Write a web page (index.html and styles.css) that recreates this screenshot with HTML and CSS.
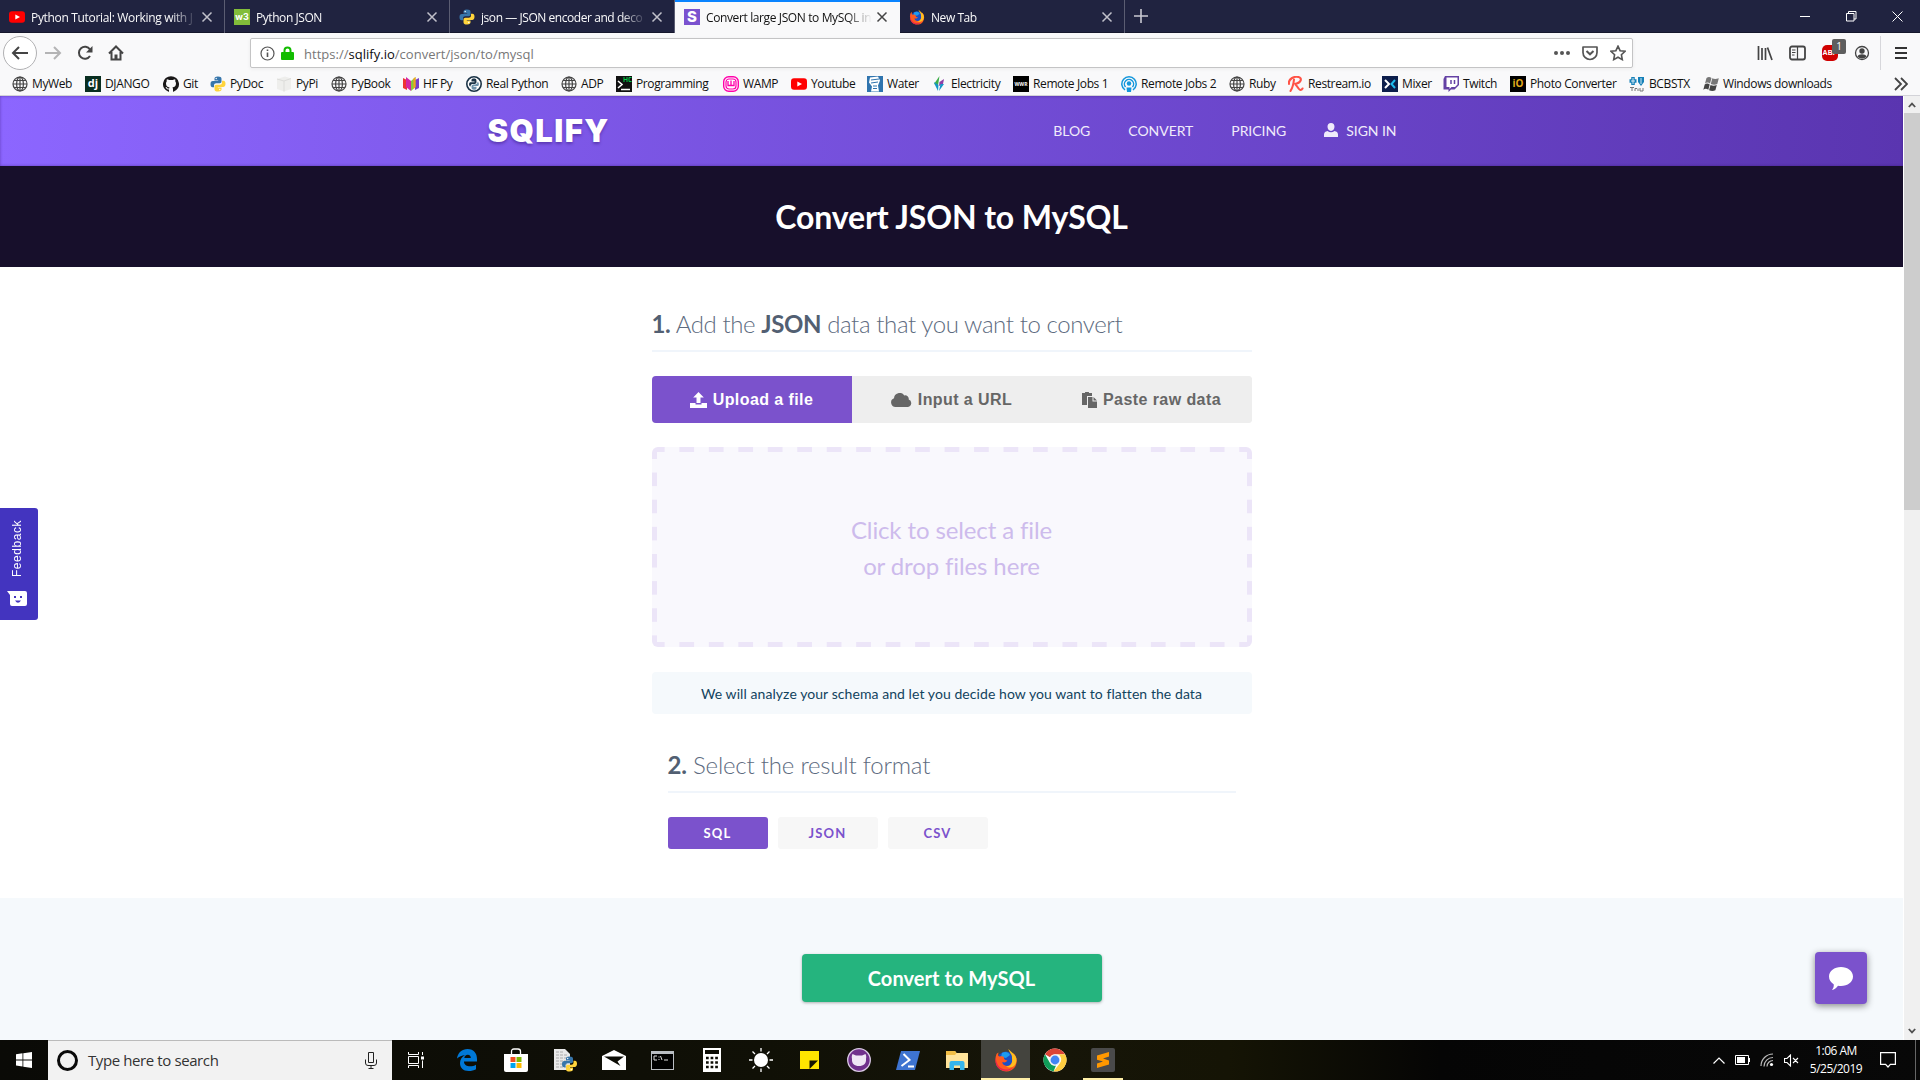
FILE: index.html
```html
<!DOCTYPE html>
<html lang="en">
<head>
<meta charset="utf-8">
<title>Convert large JSON to MySQL</title>
<link rel="stylesheet" href="styles.css">
</head>
<body>
<svg class="defs" width="0" height="0">
  <symbol id="globe" viewBox="0 0 16 16"><g fill="none" stroke="#444" stroke-width="1.2"><circle cx="8" cy="8" r="7"/><ellipse cx="8" cy="8" rx="3.4" ry="7"/><path d="M8 1v14M1 8h14M2 4.5h12M2 11.5h12"/></g></symbol>
  <symbol id="yt" viewBox="0 0 16 16"><rect y="2.3" width="16" height="11.4" rx="3" fill="#f00"/><path d="M6.3 5.4v5.2L11 8z" fill="#fff"/></symbol>
  <symbol id="python" viewBox="0 0 16 16"><path fill="#3776ab" d="M7.9.5C5 .5 4.5 1.7 4.5 2.8v1.7h3.7v.6H2.8C1.300 5.100.5 6.300.5 8.200s.8 3 2 3h1.500V9.400c0-1.200 1-2.100 2.200-2.100h3.600c1 0 1.700-.8 1.700-1.700V2.800C11.500 1.300 10.400.5 7.900.5z"/><path fill="#ffd43b" d="M8.100 15.500c2.900 0 3.400-1.200 3.400-2.300v-1.700H7.800v-.6h5.400c1.500 0 2.300-1.200 2.300-3.100s-.8-3-2-3H12v1.900c0 1.200-1 2-2.200 2H6.200c-1 0-1.700.8-1.700 1.700v2.800c0 1.500 1.100 2.300 3.600 2.300z"/><circle cx="6.200" cy="2.500" r=".7" fill="#fff"/><circle cx="9.800" cy="13.500" r=".7" fill="#fff"/></symbol>
  <symbol id="firefox" viewBox="0 0 24 24"><circle cx="12" cy="12.500" r="9" fill="#1b4fc4"/><path fill="#1c9bf0" d="M8 5c3-2 7-1 8 2l-4 3-5-1z"/><path fill="#ff5a1f" d="M2.500 6c-2 5-1.500 12 3.500 15.500 5 3.500 12 2 15-2.500 3-5 2-11-2-14 1 3 0 4-1 5 1 5-1.500 8-5 8-3 0-5-2-4.500-4 2 1 4 0 5-1.500-2 0-4-1-3.500-3.500-1-1-3-1-4.500-.5C4 8 4 7 4.500 4.500 3.500 5 3 5.500 2.500 6z"/><path fill="#ffbd1f" d="M14.500 1c0 3 4 5 3.500 9 1 5-1.500 8.500-6 8.500 5 2.500 10 0 10.500-6C23 7 18 5 14.500 1z"/><path fill="#e6224f" d="M2 9c-.5 7 4 12.500 10 12.500 3 0 5-.5 7-2-3 4-10 4.500-14 1C1.500 17.500 1 13 2 9z"/></symbol>
  <symbol id="close" viewBox="0 0 12 12"><path d="M1.500 1.500l9 9M10.500 1.500l-9 9" stroke="currentColor" stroke-width="1.500" fill="none"/></symbol>
</svg>

<div class="tabstrip">
  <div class="tab"><svg class="i16"><use href="#yt"/></svg><span class="tab-title t1">Python Tutorial: Working with J</span><svg class="x"><use href="#close"/></svg></div>
  <div class="tab"><span class="fav w3">w3</span><span class="tab-title">Python JSON</span><svg class="x"><use href="#close"/></svg></div>
  <div class="tab"><svg class="i16"><use href="#python"/></svg><span class="tab-title">json — JSON encoder and deco</span><svg class="x"><use href="#close"/></svg></div>
  <div class="tab active"><span class="fav sq">S</span><span class="tab-title t4">Convert large JSON to MySQL in</span><svg class="x"><use href="#close"/></svg></div>
  <div class="tab"><svg class="i16"><use href="#firefox"/></svg><span class="tab-title">New Tab</span><svg class="x"><use href="#close"/></svg></div>
  <svg class="plus" viewBox="0 0 14 14"><path d="M7 0v14M0 7h14" stroke="#c9c9d1" stroke-width="1.600"/></svg>
  <div class="winctl">
    <svg viewBox="0 0 11 11"><path d="M0 5.500h10" stroke="#fff"/></svg>
    <svg viewBox="0 0 11 11"><path d="M.5 2.500h7.500v7.500H.5zM2.500 2.500v-2h7.500v7.500H8" fill="none" stroke="#fff"/></svg>
    <svg viewBox="0 0 11 11"><path d="M.5.5l10 10M10.500.5l-10 10" stroke="#fff"/></svg>
  </div>
</div>

<div class="toolbar">
  <div class="navbtns">
    <span class="back"><svg width="18" height="16" viewBox="0 0 18 16"><path d="M17 8H2M8 2L2 8l6 6" fill="none" stroke="#444" stroke-width="2"/></svg></span>
    <svg width="18" height="16" viewBox="0 0 18 16"><path d="M1 8h15M10 2l6 6-6 6" fill="none" stroke="#b4b4b5" stroke-width="2"/></svg>
    <svg width="16" height="16" viewBox="0 0 16 16"><path d="M13 11a6 6 0 1 1 0-6.500" fill="none" stroke="#444" stroke-width="2"/><path d="M15.500 1v6.500H9z" fill="#444"/></svg>
    <svg width="16" height="16" viewBox="0 0 16 16"><path d="M1 8.500L8 1.500l7 7M3.500 7v7.500h9V7" fill="none" stroke="#444" stroke-width="2"/><path d="M6.500 9.500h3V15h-3z" fill="#444"/></svg>
  </div>
  <div class="urlbar">
    <svg width="15" height="15" viewBox="0 0 15 15"><circle cx="7.500" cy="7.500" r="6.500" fill="none" stroke="#555" stroke-width="1.200"/><path d="M7.500 6.500V11M7.500 3.500v1.600" stroke="#555" stroke-width="1.600"/></svg>
    <svg class="lock" width="13" height="14" viewBox="0 0 13 14"><path d="M3.500 7V4.500a3 3 0 0 1 6 0V7" fill="none" stroke="#12bc00" stroke-width="2"/><rect y="6" width="13" height="8" rx="1" fill="#12bc00"/></svg>
    <span class="url">https://<b>sqlify.io</b>/convert/json/to/mysql</span>
    <div class="urlicons">
      <svg width="16" height="16" viewBox="0 0 16 16" fill="#555"><circle cx="2" cy="8" r="2"/><circle cx="8" cy="8" r="2"/><circle cx="14" cy="8" r="2"/></svg>
      <svg width="16" height="16" viewBox="0 0 16 16"><path d="M1 2h14v5.500a7 7 0 0 1-14 0z" fill="none" stroke="#555" stroke-width="1.700" stroke-linejoin="round"/><path d="M4.500 6L8 9.300 11.500 6" fill="none" stroke="#555" stroke-width="2"/></svg>
      <svg width="16" height="16" viewBox="0 0 16 16"><path d="M8 1.200l2.100 4.500 4.900.6-3.600 3.400.9 4.900L8 12.200l-4.300 2.400.9-4.900L1 6.300l4.900-.6z" fill="none" stroke="#555" stroke-width="1.600"/></svg>
    </div>
  </div>
  <div class="tools">
    <svg width="16" height="16" viewBox="0 0 16 16"><path d="M1.500 1v14M5 3v12M8.500 3v12M10.500 2.500L15 15" stroke="#444" stroke-width="1.700"/></svg>
    <svg width="17" height="16" viewBox="0 0 17 16"><rect x="1" y="1.500" width="15" height="13" rx="2" fill="none" stroke="#444" stroke-width="1.800"/><path d="M8.500 2v12M3 5h3.500M3 7.500h3.500M3 10h2.500" stroke="#444" stroke-width="1.200"/></svg>
    <span class="abp">ABP<i>1</i></span>
    <svg width="16" height="16" viewBox="0 0 16 16"><circle cx="8" cy="8" r="6.500" fill="none" stroke="#444" stroke-width="1.300"/><circle cx="8" cy="6" r="2.700" fill="#444"/><path d="M3.500 11.500c1-3 8-3 9 0-2 2.500-7 2.500-9 0z" fill="#444"/></svg>
    <span class="sep"></span>
    <svg width="14" height="14" viewBox="0 0 14 14"><path d="M1 2h12M1 7h12M1 12h12" stroke="#333" stroke-width="1.800"/></svg>
  </div>
</div>

<div class="bookmarks">
  <span><svg><use href="#globe"/></svg>MyWeb</span>
  <span><em class="dj">dj</em>DJANGO</span>
  <span><svg viewBox="0 0 16 16"><path fill="#191717" d="M8 .2a8 8 0 0 0-2.500 15.600c.4.100.5-.2.500-.4v-2c-2 .5-2.500-.6-2.800-1.300-.2-.4-.5-.8-.8-1 .9-.3 1.600.5 1.900.9.500.6 1 .7 1.800.4.100-.5.300-.8.500-1-2-.3-3.600-1-3.600-3.900 0-.9.300-1.600.8-2.200-.2-.7-.2-1.400.1-2.100.8 0 1.600.4 2.200.9 1.300-.3 2.500-.3 3.800 0 .6-.5 1.400-.9 2.200-.9.300.7.300 1.400.1 2.100.5.600.8 1.300.8 2.200 0 2.900-1.700 3.600-3.600 3.900.4.400.6.900.6 1.600v2.400c0 .200.1.500.5.400A8 8 0 0 0 8 .2z"/></svg>Git</span>
  <span><svg><use href="#python"/></svg>PyDoc</span>
  <span><svg viewBox="0 0 16 16"><path d="M1 3l8-2.500 6 2V13l-7 2.500L1 13z" fill="#eeeeec"/><path d="M1 3l7 2 7-2.500M8 5v10.500" fill="none" stroke="#dcdcda"/></svg>PyPi</span>
  <span><svg><use href="#globe"/></svg>PyBook</span>
  <span><svg viewBox="0 0 16 16"><path d="M0 2l4 2v10l-4-2z" fill="#e33"/><path d="M3 1l5 4v10l-5-4z" fill="#d326a4"/><path d="M16 2l-4 2v10l4-2z" fill="#7a3fc8"/><path d="M12.500 1L8 5v10l4.500-4z" fill="#8cc63f"/><path d="M10.500 2.500l2-1.500v10l-2 2z" fill="#f6a21c"/></svg>HF Py</span>
  <span><svg viewBox="0 0 16 16"><circle cx="8" cy="8" r="7.200" fill="#fff" stroke="#1b3346" stroke-width="1.600"/><path d="M8 2.500c-3 0-2.500 1.500-2.500 3h3v.8H4C2.500 7 3 10.500 4.500 10.500c0-2 1-2.500 3-2.500s3-.5 3-2c0-2 0-3.500-2.500-3.500z" fill="#1b3346"/><path d="M8 13.700c3 0 2.500-1.500 2.500-3h-3V10H12c1.500-.5 1-4-.5-4.200 0 2-1 2.700-3 2.700s-3 .5-3 2c0 2 0 3.200 2.500 3.200z" fill="#6f93ab"/></svg>Real Python</span>
  <span><svg><use href="#globe"/></svg>ADP</span>
  <span><svg viewBox="0 0 16 16"><path d="M0 0h16v16H0z" fill="#111"/><path d="M2 5l4 3.500L2 12M5 13.500h9" fill="none" stroke="#fff" stroke-width="1.600"/><path d="M8 1v5M11 1v5M8 3.500h3M15.500 1.500H13v4h2.500" fill="none" stroke="#0c4"/></svg>Programming</span>
  <span><svg viewBox="0 0 16 16"><rect x=".7" y=".7" width="14.600" height="14.600" rx="5" fill="#fff" stroke="#f0a" stroke-width="1.400"/><rect x="3" y="3" width="10" height="10" rx="3" fill="none" stroke="#f0a" stroke-width="1.200"/><path d="M5 5v4.500h6V5M8 4.500v5" stroke="#f0a" fill="none" stroke-width="1.300"/></svg>WAMP</span>
  <span><svg><use href="#yt"/></svg>Youtube</span>
  <span><svg viewBox="0 0 16 16"><path d="M0 0h16v16H0z" fill="#2f74ae"/><path d="M3 1.500l8-1 2 4-2 5 1 6H4l1-5-3-4z" fill="#fff"/><path d="M4 4l8-1M4 7l7-1M6 10h4M6 12.500h4" stroke="#2f74ae"/></svg>Water</span>
  <span><svg viewBox="0 0 16 16"><path d="M8.500 0L3 8l4 1.500z" fill="#3fae49"/><path d="M13 3L8.500 6 8 10l4-2z" fill="#8d3fa8"/><path d="M3 6l4.500 3L7 15 4 9zM9.500 8L13 8l-5 7z" fill="#1696c8"/></svg>Electricity</span>
  <span><em class="wwr">WWR</em>Remote Jobs 1</span>
  <span><svg viewBox="0 0 16 16"><g fill="none" stroke="#1497dc" stroke-width="1.500"><path d="M4 14a7.200 7.200 0 1 1 8 0M4.500 11a4.600 4.600 0 1 1 7 0"/></g><circle cx="8" cy="7.500" r="2.200" fill="#1497dc"/><path d="M5.500 11.500h5L10 16H6z" fill="#1497dc"/></svg>Remote Jobs 2</span>
  <span><svg><use href="#globe"/></svg>Ruby</span>
  <span><svg viewBox="0 0 16 16"><path d="M6 3.500C5.500 8 4.500 12 2.500 15M1 8c-1-5 5-8 9.500-7 4 1 3 6-4 7 2 0 4 6 6 6 1 0 1.500-.5 2-1.500" fill="none" stroke="#ff5346" stroke-width="2.100" stroke-linecap="round"/></svg>Restream.io</span>
  <span><svg viewBox="0 0 16 16"><path d="M0 0h16v16H0z" fill="#0d1e4b"/><path d="M3 4l4 4-4 4" fill="none" stroke="#fff" stroke-width="2"/><path d="M13 4L9.500 8l3.500 4" fill="none" stroke="#1fbaed" stroke-width="2"/></svg>Mixer</span>
  <span><svg viewBox="0 0 16 16"><path d="M2 0h14v9l-4.500 4.500H8L5.500 16V13.500H.5V3z" fill="#6441a4"/><path d="M3.500 1.500h11v7L12 11H8.500l-2 2v-2h-3z" fill="#fff"/><path d="M8 4v4M11.500 4v4" stroke="#6441a4" stroke-width="1.500"/></svg>Twitch</span>
  <span><em class="io">iO</em>Photo Converter</span>
  <span><svg viewBox="0 0 16 16"><path d="M4 1v8M.5 5h7" stroke="#1580b8" stroke-width="3.500"/><path d="M9 1h6v5l-3 4-3-4z" fill="#1580b8"/><path d="M12 2v6M4 2v6M2 5h4" stroke="#fff" stroke-width=".8"/><path d="M1 11.500h4M3 11.500V15M6 15v-2.500h2M9 12.500V15M11 12v3h3v-3" stroke="#777" fill="none"/></svg>BCBSTX</span>
  <span><svg viewBox="0 0 16 16"><g fill="#777"><path d="M3.500 2q2.500-2 5 0L7 7.500q-2.500-2-5 0zM9.300 2.300q2.500 1.500 6.500 0L14.300 8q-3 1.500-6.500 0z"/></g><g fill="#444"><path d="M1.700 8.500q2.500-2 5 0l-1.400 5.300q-2.500-2-5 0zM7.500 9q3 1.500 6.300 0l-1.400 5.200q-3 1.500-6.300 0z"/></g></svg>Windows downloads</span>
  <svg class="more" viewBox="0 0 14 14"><path d="M1 1l6 6-6 6M7 1l6 6-6 6" fill="none" stroke="#444" stroke-width="1.800"/></svg>
</div>

<div class="viewport">
  <main class="page">
    <header class="site-head">
      <div class="site-inner">
        <a class="logo">SQLIFY</a>
        <nav><a>BLOG</a><a>CONVERT</a><a>PRICING</a><a class="signin"><svg width="14" height="14" viewBox="0 0 14 14" fill="#f0ebfb"><path d="M7 0c2.300 0 3.500 1.600 3.500 3.800S9 8 7 8 3.500 6 3.500 3.800 4.700 0 7 0zM0 14v-2.500C0 9.500 1.500 8.300 3.500 8c2 1.600 5 1.600 7 0 2 .3 3.500 1.500 3.500 3.500V14z"/></svg>SIGN IN</a></nav>
      </div>
    </header>
    <section class="hero"><h1>Convert JSON to MySQL</h1></section>
    <section class="form">
      <h2><b>1.</b> Add the <b>JSON</b> data that you want to convert</h2>
      <div class="seg">
        <button class="on"><svg width="17" height="16" viewBox="0 0 17 16" fill="currentColor"><path d="M8.500 0l5.300 5.500h-3.300V11h-4V5.500H3.200zM0 11h5.500v1.500h6V11H17v5H0z"/></svg>Upload a file</button>
        <button><svg width="21" height="14" viewBox="0 0 21 14" fill="currentColor"><path d="M4.500 14A4.500 4.500 0 0 1 3 5.300 5.600 5.600 0 0 1 13.300 2.500a3.500 3.500 0 0 1 4.400 4A3.900 3.900 0 0 1 17 14z"/></svg>Input a URL</button>
        <button><svg width="15" height="16" viewBox="0 0 15 16" fill="currentColor"><path d="M0 1h3a2 2 0 0 1 4 0h3v3H5v9H0z"/><path d="M6 5h4.500v4.500H15V16H6zM11.500 5L15 8.500h-3.500z"/></svg>Paste raw data</button>
      </div>
      <div class="drop">Click to select a file<br>or drop files here</div>
      <p class="note">We will analyze your schema and let you decide how you want to flatten the data</p>
      <div class="format">
        <h2><b>2.</b> Select the result format</h2>
        <div class="opts"><button class="on">SQL</button><button>JSON</button><button>CSV</button></div>
      </div>
    </section>
    <section class="action"><button class="go">Convert to MySQL</button></section>
    <aside class="feedback"><span>Feedback</span><svg width="20" height="16" viewBox="0 0 20 16"><path d="M0 0h18a2 2 0 0 1 2 2v11a2 2 0 0 1-2 2H5a2 2 0 0 1-2-2V4z" fill="#fff"/><path d="M7 5h2v2H7zM13 5h2v2h-2zM8 9.500h6q-3 4.500-6 0z" fill="#4334bf"/></svg></aside>
    <button class="chat"><svg width="24" height="23" viewBox="0 0 24 23"><path d="M12 0c6.600 0 12 4 12 9.600S18.600 19 12 19c-1 0-2 0-3-.3-1.500 2.300-3.500 3.600-6 4.300 1.500-2 2-3.500 1.700-5.700C2 15.500 0 13 0 9.600 0 4 5.400 0 12 0z" fill="#fff"/></svg></button>
  </main>
  <div class="scroll">
    <svg viewBox="0 0 8 6"><path d="M.8 5L4 1.600 7.200 5" fill="none" stroke="#505050" stroke-width="1.800"/></svg>
    <div class="thumb"></div>
    <svg viewBox="0 0 8 6"><path d="M.8 1L4 4.400 7.200 1" fill="none" stroke="#505050" stroke-width="1.800"/></svg>
  </div>
</div>

<footer class="taskbar">
  <div class="start"><svg width="16" height="16" viewBox="0 0 16 16" fill="#fff"><path d="M0 2.300l6.500-1v6.200H0zM7.300 1.200L16 0v7.500H7.300zM0 8.400h6.500v6.200l-6.500-1zM7.300 8.400H16V16l-8.700-1.200z"/></svg></div>
  <div class="search"><i class="ring"></i><span>Type here to search</span><svg width="12" height="17" viewBox="0 0 12 17"><path d="M3.500.5h5v10h-5zM.5 7.500V11q0 2.500 2.500 2.500h6q2.500 0 2.500-2.500V7.500M6 13.500v3M3.500 16.500h5" fill="none" stroke="#222"/></svg></div>
  <div class="apps">
    <span><svg width="16" height="16" viewBox="0 0 16 16"><path d="M.5 0v2.500h10V0M.5 4.500h10v7H.5zM.5 16v-2.500h10V16M14.500 0v3M14.500 8.500V16" fill="none" stroke="#fff"/><path d="M13 4.500h3v3h-3z" fill="#fff"/></svg></span>
    <span><svg width="20" height="22" viewBox="0 0 20 22"><path d="M0 9.500C1 3.500 5 0 10.500 0 17 0 20 4.500 20 10v2.500H7c0 3.500 3 4.800 6 4.800 2.500 0 4.300-.6 6-1.600v4.500c-2 1.200-4.500 1.800-7.300 1.800C6 22 3 18.500 3 14c0-3.500 2-6.300 5-7.700C5 6.500 2 7.500 0 9.500zM7.300 9h6.500c0-2-1-3.300-3-3.300S7.500 7 7.300 9z" fill="#0078d7"/></svg></span>
    <span><svg width="24" height="24" viewBox="0 0 24 24"><path d="M7.500 7V3.500Q7.500 1 10 1h4q2.500 0 2.500 2.500V7" fill="none" stroke="#fff" stroke-width="1.300"/><path d="M0 6h24v16q0 2-2 2H2q-2 0-2-2z" fill="#fff"/><path d="M6.500 9h5v5h-5z" fill="#f25022"/><path d="M12.500 9h5v5h-5z" fill="#7fba00"/><path d="M6.500 15h5v5h-5z" fill="#00a4ef"/><path d="M12.500 15h5v5h-5z" fill="#ffb900"/></svg></span>
    <span><svg width="24" height="24" viewBox="0 0 24 24"><path d="M1 1h11l5 5v16H1z" fill="#e9e9e9"/><path d="M3 4h8M3 7h11M3 10h11M3 13h11M3 16h11M3 19h11" stroke="#aaa" stroke-dasharray="3 1"/><use href="#python" x="8.500" y="8" width="16" height="16"/></svg></span>
    <span><svg width="24" height="20" viewBox="0 0 24 20"><path d="M0 6L12 0l12 6v14H0z" fill="#fff"/><path d="M2 6.500h20l-6.500 5 3 4.500z" fill="#0c0c05"/></svg></span>
    <span><svg width="23" height="19" viewBox="0 0 23 19"><path d="M0 0h23v19H0z" fill="#b9bdc2"/><path d="M1 3h21v15H1z"/><path d="M6 5H3v4h3M8 5.500v1M8 8v1M9.500 5l1.500 4M13 9h4" fill="none" stroke="#ddd"/></svg></span>
    <span><svg width="18" height="24" viewBox="0 0 18 24"><path d="M0 0h18v24H0z" fill="#fff"/><path d="M2 2h14v4H2z" fill="#0c0c05"/><path d="M3 10h12M3 14.500h12M3 19h12" stroke="#0c0c05" stroke-width="2.500" stroke-dasharray="2.700 1.900"/></svg></span>
    <span><svg width="24" height="24" viewBox="0 0 24 24"><circle cx="12" cy="12" r="7" fill="#fff"/><path d="M12 0v3.500M12 20.500V24M0 12h3.500M20.500 12H24M3.500 3.500L6 6M18 18l2.500 2.500M20.500 3.500L18 6M6 18l-2.500 2.500" stroke="#fff" stroke-width="1.300"/></svg></span>
    <span><svg width="19" height="18" viewBox="0 0 19 18"><path d="M0 0h19v18H0z" fill="#ffe600"/><path d="M9.500 18V9.500H18z" fill="#151500"/><path d="M11 18l8-8v8z" fill="#ffe600"/></svg></span>
    <span><svg width="24" height="24" viewBox="0 0 24 24"><circle cx="12" cy="12" r="11.300" fill="#70308c" stroke="#d9c9e4" stroke-width="1.300"/><path d="M5.500 6l3.500 1.500h6L18.500 6c1 2 .8 3.500.5 5 .5 4.500-2.500 7-7 7s-7.500-2.500-7-7c-.3-1.500-.5-3 .5-5z" fill="#efe6f5"/></svg></span>
    <span><svg width="24" height="19" viewBox="0 0 24 19"><path d="M5 0h19l-5 19H0z" fill="#3e74d1"/><path d="M7.500 3l6 6-8 6M12 15.500h6" fill="none" stroke="#fff" stroke-width="2"/></svg></span>
    <span><svg width="22" height="19" viewBox="0 0 22 19"><path d="M0 0h9l1.500 2H22v15H0z" fill="#ffe39a"/><path d="M0 0h9l1.500 2L9 4H0z" fill="#f1bd45"/><path d="M3.500 19V12q0-2 2-2h11q2 0 2 2v7H14v-4.500H8V19z" fill="#35b5ec"/></svg></span>
    <span class="cur"><svg width="24" height="24"><use href="#firefox"/></svg></span>
    <span><svg width="24" height="24" viewBox="0 0 24 24"><circle cx="12" cy="12" r="11.500" fill="#fff"/><path d="M2 6.200A11.500 11.500 0 0 1 22 6.300H12A5.700 5.700 0 0 0 7 9.200z" fill="#db4437"/><path d="M2 6.200l5 8.700a5.700 5.700 0 0 0 6 2.700L10.500 23.400A11.500 11.500 0 0 1 2 6.200z" fill="#0f9d58"/><path d="M22 6.300a11.500 11.500 0 0 1-11.500 17.100L17 14.900a5.700 5.700 0 0 0-2-8.600z" fill="#ffcd40"/><circle cx="12" cy="12" r="5.500" fill="#f1f1f1"/><circle cx="12" cy="12" r="4.400" fill="#4285f4"/></svg></span>
    <span class="run"><svg width="24" height="24" viewBox="0 0 24 24"><rect width="24" height="24" rx="2" fill="#4a4a4a"/><path d="M6 7.500L18 4v4.500L12 10.400l6 2V16.500L6 20v-4.500l6-2-6-1.800z" fill="#ff9800"/></svg></span>
  </div>
  <div class="tray">
    <svg width="12" height="7" viewBox="0 0 12 7"><path d="M.5 6.500L6 1l5.500 5.500" fill="none" stroke="#fff" stroke-width="1.200"/></svg>
    <svg width="15" height="10" viewBox="0 0 15 10"><path d="M.5.5h13v9H.5z" fill="none" stroke="#fff"/><path d="M2 2h8v6H2zM14 3h1v4h-1z" fill="#fff"/></svg>
    <svg width="14" height="14" viewBox="0 0 14 14"><g fill="none" stroke="#bbb" stroke-width="1.200"><path d="M1 13A12 12 0 0 1 13 1M4 13.500A9 9 0 0 1 13 4.500M7 13.500a6 6 0 0 1 6-6"/></g><circle cx="11.500" cy="11.500" r="1.600" fill="#fff"/></svg>
    <svg width="15" height="13" viewBox="0 0 15 13"><path d="M.5 4.500H3L6.500 1v11L3 8.500H.5zM9 4l5 5M14 4L9 9" fill="none" stroke="#fff" stroke-width="1.100"/></svg>
    <div class="clock">1:06 AM<br>5/25/2019</div>
    <svg width="16" height="16" viewBox="0 0 16 16"><path d="M.6.600h14.800v11.800h-5L8 15l-2.400-2.600h-5z" fill="none" stroke="#fff" stroke-width="1.200"/></svg>
    <i class="peek"></i>
  </div>
</footer>
</body>
</html>
```
FILE: styles.css
```css
* { box-sizing: border-box; }
body { margin: 0; width: 1920px; height: 1080px; overflow: hidden; display: flex; flex-direction: column; font-family: "Open Sans", "Noto Sans", sans-serif; font-size: 12px; color: #111; }
button { border: 0; margin: 0; padding: 0; font: inherit; }
svg { display: block; flex: none; }
.defs { position: absolute; }
.i16 { width: 16px; height: 16px; }

/* tabs */
.tabstrip { height: 33px; display: flex; align-items: center; background: #202340; border-bottom: 1px solid #15172c; }
.tab { width: 225px; height: 33px; padding: 1px 11px 0 9px; display: flex; align-items: center; color: #f9f9fa; border-right: 1px solid #5b5d72; margin-bottom: -1px; }
.tab-title { flex: 1; width: 0; margin-left: 6px; letter-spacing: -.44px; white-space: nowrap; overflow: hidden; mask-image: linear-gradient(to right, #000 calc(100% - 26px), transparent); }
.t1 { letter-spacing: -.33px; }
.t4 { letter-spacing: -.38px; }
.x { width: 12px; height: 12px; margin-left: 4px; color: #c0c0ca; }
.active { background: #f9f9fa; color: #111; border-top: 2px solid #0a84ff; border-right: 0; padding: 0 12px 1px 9px; }
.active .x { color: #444; }
.fav { width: 16px; height: 16px; color: #fff; font: bold 11px/15px Inter, sans-serif; text-align: center; }
.w3 { background: #82bd3a; font-size: 9px; }
.sq { background: #7b52cf; font-size: 15px; line-height: 16px; font-weight: 800; }
.plus { width: 14px; height: 14px; margin-left: 9px; }
.winctl { margin-left: auto; display: flex; gap: 35px; margin-right: 17px; }
.winctl svg { width: 11px; height: 11px; }

/* toolbar */
.toolbar { height: 39px; display: flex; align-items: center; background: #f9f9fa; padding: 1px 12px 0 3px; }
.navbtns { display: flex; align-items: center; gap: 15px; width: 247px; }
.navbtns > svg:first-of-type { margin-left: -8px; }
.back { width: 34px; height: 34px; border: 1px solid #b1b1b3; border-radius: 50%; display: grid; place-items: center; background: #fff; }
.urlbar { width: 1383px; height: 30px; border: 1px solid #c4c4c5; border-radius: 2px; background: #fff; display: flex; align-items: center; padding: 0 6px 0 9px; box-shadow: 0 1px 4px rgba(0,0,0,.06); }
.lock { margin: 0 10px 0 6px; }
.url { margin-top: 1px; font-size: 13px; color: #777; letter-spacing: .02px; }
.url b { font-weight: 400; color: #0c0c0d; }
.urlicons { margin-left: auto; display: flex; gap: 12px; }
.tools { flex: 1; display: flex; align-items: center; justify-content: flex-end; gap: 16px; }
.abp { position: relative; width: 16px; height: 16px; border-radius: 5px; background: #d00000; color: #fff; font: bold 7px/16px "Liberation Sans", sans-serif; text-align: center; }
.abp i { position: absolute; left: 10px; top: -6px; width: 14px; height: 15px; border-radius: 2px; background: #5e5e5e; font: 10px/14px "Open Sans", sans-serif; }
.sep { width: 1px; height: 34px; background: #d7d7db; margin: 0 -3px 0 -6px; }

/* bookmarks */
.bookmarks { height: 24px; padding: 0 12px; background: #f9f9fa; border-bottom: 1px solid #d3d3d8; display: grid; align-items: center; grid-template-columns: 73px 78px 47px 66px 55px 72px 63px 95px 55px 107px 68px 76px 64px 82px 108px 108px 59px 94px 61px 67px 119px 74px 130px 1fr; }
.bookmarks span { display: flex; align-items: center; gap: 4px; white-space: nowrap; letter-spacing: -.38px; }
.bookmarks span svg { width: 16px; height: 16px; }
.bookmarks em { flex: none; width: 16px; height: 16px; color: #fff; background: #092e20; font: bold 11px/14px "Open Sans", sans-serif; letter-spacing: 0; text-align: center; }
.bookmarks .wwr { background: #000; font-size: 5px; line-height: 16px; }
.bookmarks .io { background: #000; color: #e0ac1b; font-size: 10px; }
.more { width: 14px; height: 14px; justify-self: end; }

/* page */
.viewport { height: 944px; display: flex; }
.page { position: relative; width: 1903px; background: #fff; font-family: Lato, sans-serif; }
.site-head { height: 70px; background: linear-gradient(92deg, #8c66ff, #5a35b0); box-shadow: inset 0 0 3px rgba(40,10,100,.45); }
.site-inner { width: 928px; height: 70px; margin: 0 auto; display: flex; align-items: center; justify-content: space-between; }
.logo { font: 900 31px/40px Inter, sans-serif; letter-spacing: 1.4px; color: #fff; text-shadow: 0 2px 3px rgba(40,10,100,.4); }
nav { display: flex; gap: 38px; margin: 0 19px 2px 0; color: #f0ebfb; font-size: 14px; letter-spacing: -.05px; }
.signin { display: flex; gap: 8px; align-items: center; }
.hero { height: 101px; background: #170f2b; display: grid; place-items: center; }
h1 { margin: 0; color: #fff; font-size: 32px; line-height: 40px; font-weight: 700; letter-spacing: -.13px; }
.form { width: 600px; height: 631px; margin: 0 auto; padding-top: 40px; }
h2 { margin: 0 0 24px; height: 45px; border-bottom: 2px solid #f0f5fb; font-size: 24px; line-height: 34px; font-weight: 300; letter-spacing: -.4px; color: #5d6b80; white-space: nowrap; }
h2 b { font-weight: 700; color: #525f72; }
.seg { height: 47px; display: grid; grid-template-columns: repeat(3, 1fr); border-radius: 4px; overflow: hidden; background: #eee; }
.seg button { display: flex; align-items: center; justify-content: center; gap: 6px; background: #eee; color: #666; font: bold 16px "Liberation Sans", Arial, sans-serif; letter-spacing: .42px; }
.seg .on { background: #7b52cc; color: #fff; }
.drop {
  --h: linear-gradient(90deg, #ece5f8 50%, transparent 50%);
  --v: linear-gradient(#ece5f8 50%, transparent 50%);
  height: 200px; margin-top: 24px; padding-top: 65px; border-radius: 6px;
  background:
    var(--h) -2.1px 0 / 29.47px 5px repeat-x,
    var(--h) -2.1px 100% / 29.47px 5px repeat-x,
    var(--v) 0 -1.6px / 5px 27.15px repeat-y,
    var(--v) 100% -1.6px / 5px 27.15px repeat-y,
    #f9f8fd;
  color: #cdbbec; font-size: 24px; line-height: 36px; letter-spacing: -.12px; font-variant-ligatures: common-ligatures; text-align: center;
}
.note { margin: 25px 0 36px; height: 42px; border-radius: 4px; background: #f5f9fc; color: #12435e; font-size: 14px; line-height: 44px; letter-spacing: .07px; text-align: center; }
.format { padding: 0 16px; }
.format h2 { height: 43px; line-height: 30px; letter-spacing: -.2px; }
.opts { display: flex; gap: 10px; }
.opts button { width: 100px; height: 32px; background: #f7f7f7; border-radius: 3px; color: #7b52cc; font-size: 13px; font-weight: 700; letter-spacing: 1.2px; }
.opts .on { background: #7b52cc; color: #fff; }
.action { height: 142px; padding-top: 56px; background: #f5f9fc; display: flex; justify-content: center; }
.go { width: 300px; height: 48px; padding-bottom: 1px; border-radius: 4px; background: #25b47e; color: #fff; font-size: 20px; font-weight: 700; letter-spacing: .05px; box-shadow: 0 1px 3px rgba(0,0,0,.3); }
.feedback { position: absolute; left: 0; top: 412px; width: 38px; height: 112px; background: #4334bf; border-radius: 0 3px 3px 0; display: flex; flex-direction: column; align-items: center; justify-content: space-between; padding: 12px 5px 13px 0; color: #fff; }
.feedback span { writing-mode: vertical-rl; transform: rotate(180deg); font: 12px/14px "Liberation Sans", Arial, sans-serif; letter-spacing: .55px; }
.chat { position: absolute; left: 1815px; top: 856px; width: 52px; height: 52px; border-radius: 4px; background: #7b52cc; display: grid; place-items: center; box-shadow: 0 2px 7px rgba(0,0,0,.45); }
.scroll { width: 17px; background: #f0f0f0; border-left: 1px solid #fff; display: flex; flex-direction: column; align-items: center; justify-content: space-between; padding: 6px 0; }
.scroll svg { width: 8px; height: 6px; }
.thumb { width: 16px; height: 397px; margin: 5px 0 auto; background: #cdcdcd; }

/* taskbar */
.taskbar { height: 40px; display: flex; background: linear-gradient(90deg, #0a0a06, #101006 40%, #161508 55%, #151405 64%, #050505 75%, #080808); }
.start { width: 48px; display: grid; place-items: center; }
.search { width: 344px; background: #f2f2f2; border-top: 1px solid #bbb; display: flex; align-items: center; padding: 0 15px 0 9px; font-size: 15px; color: #333; }
.search span { margin: 0 auto 2px 10px; letter-spacing: -.4px; }
.ring { width: 21px; height: 21px; border: 3px solid #0a0a0a; border-radius: 50%; }
.apps { display: grid; grid-template-columns: 50px repeat(14, 49px); }
.apps span { display: grid; place-items: center; border-bottom: 2px solid transparent; border-top: 2px solid transparent; }
.apps span:first-child { padding-right: 2px; }
.apps .cur { background: #44443e; border-bottom-color: #fff0a8; border-top-color: #44443e; }
.apps .run { border-bottom-color: #fff0a8; margin: 0 5px 0 4px; }
.tray { margin-left: auto; display: flex; align-items: center; gap: 10px; color: #fff; }
.clock { width: 54px; margin: 0 7px 0 0; text-align: center; line-height: 18px; letter-spacing: -.5px; white-space: nowrap; }
.peek { width: 1px; height: 40px; background: #666; margin: 0 4px 0 9px; }
```
